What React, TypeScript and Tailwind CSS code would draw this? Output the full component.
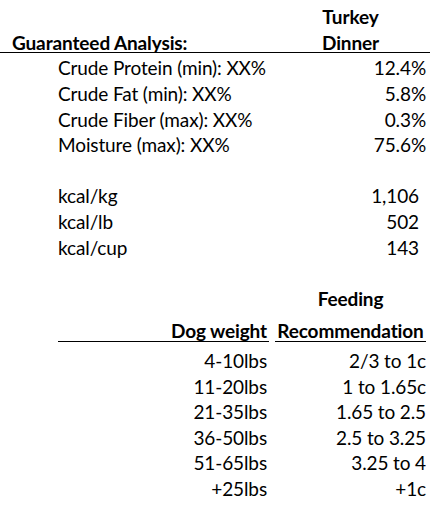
import React from "react";

const font = { fontFamily: "Lato, 'Open Sans', sans-serif" };

const analysis = [
  { label: "Crude Protein (min): XX%", value: "12.4%" },
  { label: "Crude Fat (min): XX%", value: "5.8%" },
  { label: "Crude Fiber (max): XX%", value: "0.3%" },
  { label: "Moisture (max): XX%", value: "75.6%" },
];

const energy = [
  { label: "kcal/kg", value: "1,106" },
  { label: "kcal/lb", value: "502" },
  { label: "kcal/cup", value: "143" },
];

const feeding = [
  { weight: "4-10lbs", amount: "2/3 to 1c" },
  { weight: "11-20lbs", amount: "1 to 1.65c" },
  { weight: "21-35lbs", amount: "1.65 to 2.5" },
  { weight: "36-50lbs", amount: "2.5 to 3.25" },
  { weight: "51-65lbs", amount: "3.25 to 4" },
  { weight: "+25lbs", amount: "+1c" },
];

const Row = ({
  left,
  right,
  leftAlign = "left",
  rightClass = "text-right",
  bold = false,
}: {
  left?: string;
  right?: string;
  leftAlign?: "left" | "right";
  rightClass?: string;
  bold?: boolean;
}) => (
  <div className={`flex h-[25.6px] items-center ${bold ? "font-bold" : ""}`}>
    <div className="w-[58px] shrink-0" />
    <div
      className={`w-[211px] shrink-0 whitespace-nowrap ${
        leftAlign === "right" ? "text-right pr-[2px]" : ""
      }`}
    >
      {left}
    </div>
    <div className={`ml-[6px] w-[151px] shrink-0 whitespace-nowrap ${rightClass}`}>
      {right}
    </div>
  </div>
);

export default function App() {
  return (
    <div
      className="w-[445px] h-[508px] bg-white text-black text-[19px] leading-[25.6px] tracking-[-0.12px] pt-[4.2px]"
      style={font}
    >
      <Row right="Turkey" rightClass="text-center" bold />
      <div className="flex h-[25.6px] items-center font-bold">
        <div className="w-[275px] shrink-0 pl-[12px] whitespace-nowrap">
          Guaranteed Analysis:
        </div>
        <div className="w-[151px] shrink-0 text-center">Dinner</div>
      </div>
      <div className="h-px w-[430px] bg-black -mt-[3.6px] mb-[2.6px]" />

      {analysis.map((r) => (
        <Row key={r.label} left={r.label} right={r.value} />
      ))}
      <Row />
      {energy.map((r) => (
        <Row
          key={r.label}
          left={r.label}
          right={r.value}
          rightClass="text-right pr-[7px]"
        />
      ))}
      <Row />
      <Row right="Feeding" rightClass="text-center" bold />

      <div className="h-[6.8px]" />
      <Row
        left="Dog weight"
        leftAlign="right"
        right="Recommendation"
        rightClass="text-center"
        bold
      />
      <div className="flex -mt-[2.8px] mb-[1.8px]">
        <div className="w-[58px] shrink-0" />
        <div className="h-px w-[211px] bg-black" />
        <div className="ml-[6px] h-px w-[151px] bg-black" />
      </div>
      <div className="h-[4.4px]" />

      {feeding.map((r) => (
        <Row
          key={r.weight}
          left={r.weight}
          leftAlign="right"
          right={r.amount}
        />
      ))}
    </div>
  );
}
